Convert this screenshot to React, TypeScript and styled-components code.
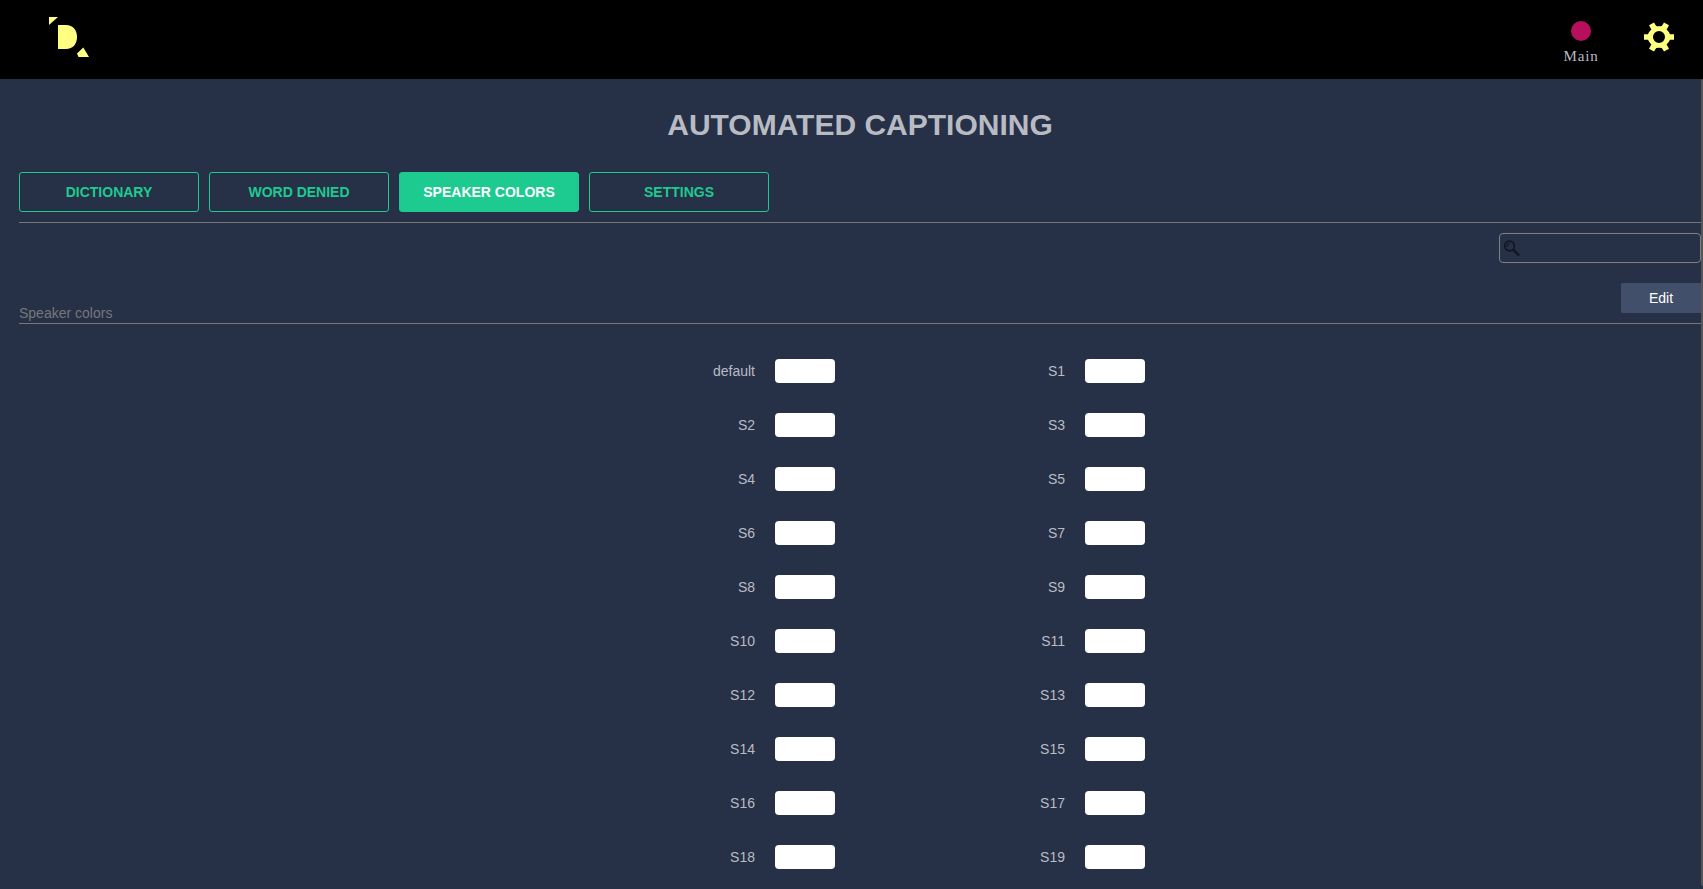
import React from "react";
import styled, { createGlobalStyle } from "styled-components";

const GlobalStyle = createGlobalStyle`
  * { box-sizing: border-box; }
  html, body { margin: 0; padding: 0; height: 100%; overflow: hidden; }
  body {
    background: #263148;
    font-family: "Liberation Sans", Arial, sans-serif;
    font-size: 14px;
    color: #b9bbc3;
  }
`;

const Page = styled.div`
  display: flex;
  flex-direction: column;
  height: 889px;
  overflow: hidden;
`;

const Header = styled.header`
  display: flex;
  justify-content: space-between;
  flex: none;
  height: 79px;
  padding: 17px 29px 0 49px;
  background: #000;
`;

const HeaderActions = styled.div`
  display: flex;
`;

const Channel = styled.div`
  display: flex;
  flex-direction: column;
  align-items: center;
  width: 40px;
  margin: 4px 43px 0 0;
  font: 15px/16px "Liberation Serif", "Times New Roman", serif;
  letter-spacing: 0.8px;
`;

const StatusDot = styled.span`
  width: 20px;
  height: 20px;
  margin-bottom: 7px;
  border-radius: 50%;
  background: #b80f5c;
`;

const GearIcon = styled.svg`
  margin-top: 5px;
`;

const Body = styled.div`
  display: flex;
  flex: 1;
  min-height: 0;
`;

const Content = styled.main`
  flex: 1;
  min-width: 0;
  padding-left: 19px;
`;

const ScrollTrack = styled.div`
  width: 2px;
  padding-bottom: 3px;
`;

const ScrollThumb = styled.div`
  height: 100%;
  border-radius: 2px 0 0 2px;
  background: #555;
`;

const Title = styled.h1`
  margin: 0;
  padding-top: 28px;
  height: 93px;
  font-size: 30px;
  line-height: 36px;
  font-weight: bold;
  text-align: center;
`;

const Tabs = styled.nav`
  display: flex;
  gap: 10px;
  height: 51px;
  border-bottom: 1px solid #777;
`;

const Tab = styled.button<{ $active?: boolean }>`
  width: 180px;
  height: 40px;
  padding: 0;
  border: 1px solid #1dca8f;
  border-radius: 3px;
  background: ${(p) => (p.$active ? "#1dca8f" : "transparent")};
  color: ${(p) => (p.$active ? "#fff" : "#1dca8f")};
  font: bold 14px "Liberation Sans", Arial, sans-serif;
`;

const SearchBox = styled.label`
  display: flex;
  align-items: center;
  width: 202px;
  height: 30px;
  margin: 10px 0 0 auto;
  padding-left: 4px;
  border: 1px solid #808080;
  border-radius: 4px;
`;

const SearchInput = styled.input`
  flex: 1;
  min-width: 0;
  border: 0;
  outline: 0;
  background: transparent;
  color: #fff;
`;

const SectionHead = styled.div`
  display: flex;
  justify-content: space-between;
  height: 41px;
  margin-top: 20px;
  border-bottom: 1px solid #777;
  color: #777;
`;

const SectionName = styled.span`
  padding-top: 22px;
  line-height: 16px;
`;

const EditButton = styled.button`
  width: 80px;
  height: 30px;
  padding: 0;
  border: 0;
  border-radius: 2px 0 0 2px;
  background: #424f6a;
  color: #fff;
  font: 14px "Liberation Sans", Arial, sans-serif;
`;

const SpeakerGrid = styled.div`
  display: grid;
  grid-template-columns: 310px 310px;
  grid-auto-rows: 24px;
  row-gap: 30px;
  justify-content: center;
  padding: 35px 50px 0 0;
`;

const Speaker = styled.div`
  display: flex;
  align-items: center;
  justify-content: flex-end;
  gap: 20px;
`;

const Swatch = styled.span`
  width: 60px;
  height: 24px;
  border-radius: 4px;
  background: #fff;
`;

const tabs = ["DICTIONARY", "WORD DENIED", "SPEAKER COLORS", "SETTINGS"];
const speakers = ["default", ...Array.from({ length: 19 }, (_, i) => `S${i + 1}`)];

export default function App() {
  return (
    <Page>
      <GlobalStyle />
      <Header>
        <svg width="40" height="40" viewBox="0 0 40 40" fill="#ffff82">
          <path d="M0 0H9L0 8Z" />
          <path d="M9 8H17C24 8 28 13 28 20S24 32 17 32H9Z" />
          <path d="M34.3 30.5L40 40H29.5L28 36.5Z" />
        </svg>
        <HeaderActions>
          <Channel>
            <StatusDot />
            Main
          </Channel>
          <GearIcon width="30" height="30" viewBox="-15 -15 30 30" fill="#ffff82">
            <path
              fillRule="evenodd"
              d="M-11-2.8Q-9.8-5.6-7.6-7.5L-10-11.7L-5-14.4L-2.8-11Q0-10.6 2.8-11L5-14.4L10-11.7L7.6-7.5Q9.8-5.6 11-2.8H15V2.8H11Q9.8 5.6 7.6 7.5L10 11.7L5 14.4L2.8 11Q0 10.6-2.8 11L-5 14.4L-10 11.7L-7.6 7.5Q-9.8 5.6-11 2.8H-15V-2.8ZM6 0A6 6 0 1 0-6 0A6 6 0 1 0 6 0Z"
            />
          </GearIcon>
        </HeaderActions>
      </Header>
      <Body>
        <Content>
          <Title>AUTOMATED CAPTIONING</Title>
          <Tabs>
            {tabs.map((t) => (
              <Tab key={t} $active={t === "SPEAKER COLORS"}>
                {t}
              </Tab>
            ))}
          </Tabs>
          <SearchBox>
            <svg width="17" height="17" viewBox="0 0 17 17" fill="none" stroke="#101722">
              <circle cx="5.5" cy="6" r="4.8" strokeWidth="1.7" />
              <path d="M3.2 6.8C2.9 4.8 4 3.6 5.5 3.6" strokeWidth="1.2" />
              <path d="M9 9.3L15.2 15.5" strokeWidth="2.4" />
            </svg>
            <SearchInput aria-label="Search" />
          </SearchBox>
          <SectionHead>
            <SectionName>Speaker colors</SectionName>
            <EditButton>Edit</EditButton>
          </SectionHead>
          <SpeakerGrid>
            {speakers.map((name) => (
              <Speaker key={name}>
                {name}
                <Swatch />
              </Speaker>
            ))}
          </SpeakerGrid>
        </Content>
        <ScrollTrack>
          <ScrollThumb />
        </ScrollTrack>
      </Body>
    </Page>
  );
}
